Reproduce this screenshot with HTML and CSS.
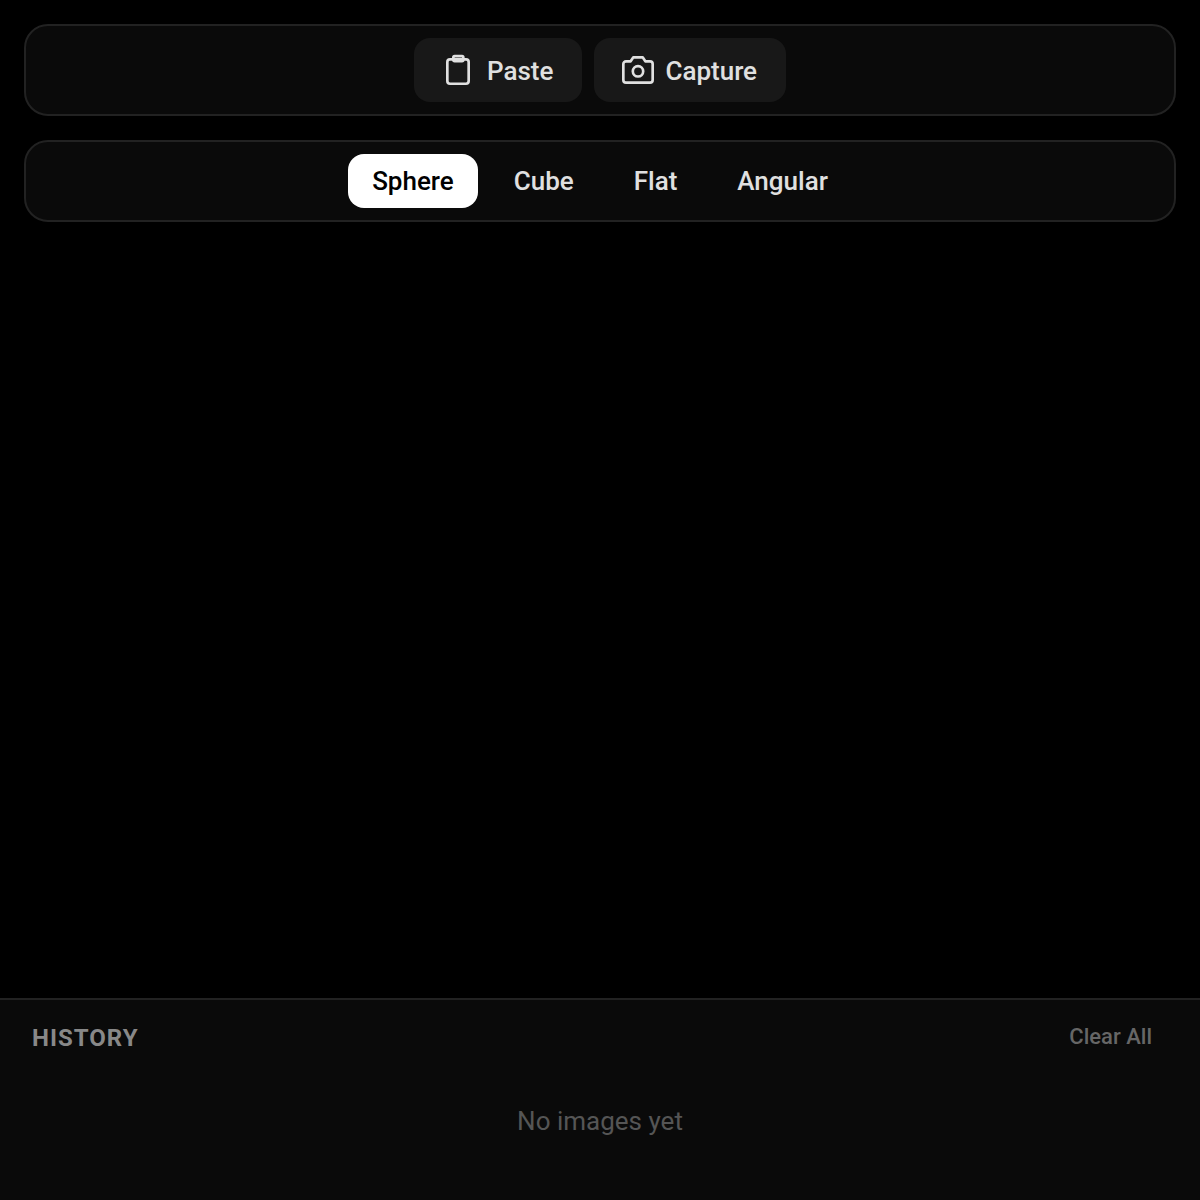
FILE: index.html
```html
<!DOCTYPE html>
<html>
<head>
<title>Viewer</title>
<meta http-equiv="Content-Type" content="text/html; charset=utf-8">
<link rel="stylesheet" href="styles.css">
</head>
<body>
<div class="app">
	<div class="bars">
		<div class="bar actions">
			<button class="actionBtn pasteBtn">
				<svg class="ico" width="32" height="32" viewBox="0 0 24 24" fill="none" stroke="currentColor" stroke-width="2" stroke-linejoin="round">
					<rect x="4" y="4" width="16" height="18.300" rx="2"/>
					<rect x="8.500" y="1.600" width="7.500" height="3.800" rx="1"/>
				</svg>
				<span class="btnLabel">Paste</span>
			</button>
			<button class="actionBtn captureBtn">
				<svg class="ico" width="32" height="32" viewBox="0 0 24 24" fill="none" stroke="currentColor" stroke-width="2" stroke-linejoin="round">
					<path d="M3 5.500h3.500l2-3h7l2 3H21a2 2 0 0 1 2 2v12a2 2 0 0 1-2 2H3a2 2 0 0 1-2-2v-12a2 2 0 0 1 2-2z"/>
					<circle cx="12" cy="13" r="3.900"/>
				</svg>
				<span class="btnLabel">Capture</span>
			</button>
		</div>
		<div class="bar modes">
			<div class="mode active">Sphere</div>
			<div class="mode">Cube</div>
			<div class="mode">Flat</div>
			<div class="mode">Angular</div>
		</div>
	</div>
	<div class="history">
		<div class="historyHead">
			<div class="historyTit">HISTORY</div>
			<div class="clearAll">Clear All</div>
		</div>
		<div class="empty">No images yet</div>
	</div>
</div>
</body>
</html>
```
FILE: styles.css
```css
* {
	box-sizing: border-box;
}
html, body {
	margin: 0;
	height: 100%;
	background: #000;
}
body {
	font-family: Roboto, "Liberation Sans", sans-serif;
	color: #e0e0e0;
}
.app {
	height: 1200px;
	display: flex;
	flex-direction: column;
	justify-content: space-between;
}
.bars {
	padding: 24px 24px 0;
	display: flex;
	flex-direction: column;
	gap: 24px;
}
.bar {
	display: flex;
	justify-content: center;
	gap: 12px;
	background: #0a0a0a;
	border: 2px solid #222;
	border-radius: 24px;
	padding: 12px;
}
.actionBtn {
	height: 64px;
	display: flex;
	align-items: center;
	gap: 12px;
	padding: 0 28px;
	background: #181818;
	color: #e0e0e0;
	border: 0;
	border-radius: 16px;
	font-family: inherit;
	font-size: 26px;
	font-weight: 500;
}
.pasteBtn {
	gap: 13px;
	padding-right: 29px;
}
.captureBtn {
	gap: 11px;
	padding-right: 29px;
}
.btnLabel {
	padding-top: 2px;
}
.ico {
	display: block;
	flex: none;
}
.mode {
	height: 54px;
	line-height: 54px;
	padding: 0 24px;
	border-radius: 16px;
	font-size: 26px;
	font-weight: 500;
}
.mode.active {
	background: #fff;
	color: #000;
}
.history {
	height: 202px;
	background: #0a0a0a;
	border-top: 2px solid #222;
}
.historyHead {
	display: flex;
	justify-content: space-between;
	align-items: flex-start;
	padding: 24px 48px 0 32px;
}
.historyTit {
	font-size: 24px;
	font-weight: 700;
	letter-spacing: 1px;
	color: #888;
}
.clearAll {
	font-size: 22px;
	font-weight: 500;
	color: #666;
}
.empty {
	margin-top: 54px;
	text-align: center;
	font-size: 26px;
	color: #555;
}
```
